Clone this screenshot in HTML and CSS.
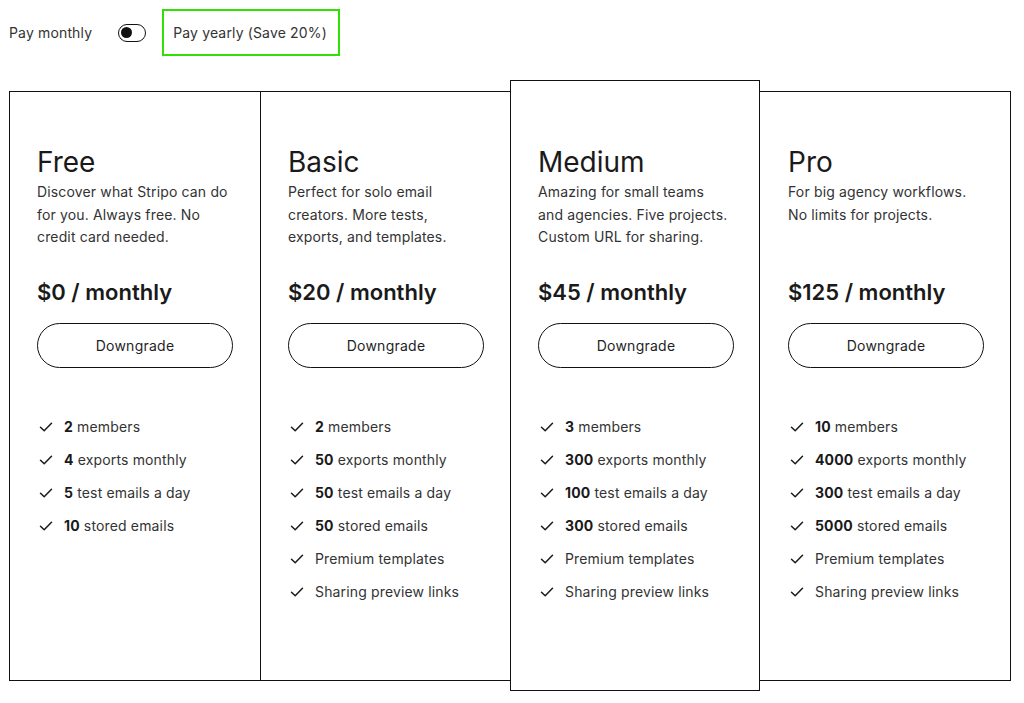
FILE: index.html
```html
<!DOCTYPE html>
<html lang="en">
<head>
<meta charset="utf-8">
<title>Pricing</title>
<link rel="stylesheet" href="styles.css">
</head>
<body>
<div class="page">
  <div class="billing">
    <span class="billing-label">Pay monthly</span>
    <span class="toggle"><span class="toggle-knob"></span></span>
    <span class="billing-yearly">Pay yearly (Save 20%)</span>
  </div>

  <div class="plans">
    <div class="plan plan-free">
      <h2 class="plan-title">Free</h2>
      <p class="plan-desc">Discover what Stripo can do for you. Always free. No credit card needed.</p>
      <div class="plan-price">$0 / monthly</div>
      <button class="plan-btn">Downgrade</button>
      <ul class="features">
        <li><svg class="check" viewBox="0 0 14 14"><path d="M1.5 7.2 L5.2 10.8 L12.5 3.2"/></svg><span><b>2</b> members</span></li>
        <li><svg class="check" viewBox="0 0 14 14"><path d="M1.5 7.2 L5.2 10.8 L12.5 3.2"/></svg><span><b>4</b> exports monthly</span></li>
        <li><svg class="check" viewBox="0 0 14 14"><path d="M1.5 7.2 L5.2 10.8 L12.5 3.2"/></svg><span><b>5</b> test emails a day</span></li>
        <li><svg class="check" viewBox="0 0 14 14"><path d="M1.5 7.2 L5.2 10.8 L12.5 3.2"/></svg><span><b>10</b> stored emails</span></li>
      </ul>
    </div>

    <div class="plan plan-basic">
      <h2 class="plan-title">Basic</h2>
      <p class="plan-desc">Perfect for solo email creators. More tests, exports, and templates.</p>
      <div class="plan-price">$20 / monthly</div>
      <button class="plan-btn">Downgrade</button>
      <ul class="features">
        <li><svg class="check" viewBox="0 0 14 14"><path d="M1.5 7.2 L5.2 10.8 L12.5 3.2"/></svg><span><b>2</b> members</span></li>
        <li><svg class="check" viewBox="0 0 14 14"><path d="M1.5 7.2 L5.2 10.8 L12.5 3.2"/></svg><span><b>50</b> exports monthly</span></li>
        <li><svg class="check" viewBox="0 0 14 14"><path d="M1.5 7.2 L5.2 10.8 L12.5 3.2"/></svg><span><b>50</b> test emails a day</span></li>
        <li><svg class="check" viewBox="0 0 14 14"><path d="M1.5 7.2 L5.2 10.8 L12.5 3.2"/></svg><span><b>50</b> stored emails</span></li>
        <li><svg class="check" viewBox="0 0 14 14"><path d="M1.5 7.2 L5.2 10.8 L12.5 3.2"/></svg><span>Premium templates</span></li>
        <li><svg class="check" viewBox="0 0 14 14"><path d="M1.5 7.2 L5.2 10.8 L12.5 3.2"/></svg><span>Sharing preview links</span></li>
      </ul>
    </div>

    <div class="plan plan-featured">
      <h2 class="plan-title">Medium</h2>
      <p class="plan-desc">Amazing for small teams and agencies. Five projects. Custom URL for sharing.</p>
      <div class="plan-price">$45 / monthly</div>
      <button class="plan-btn">Downgrade</button>
      <ul class="features">
        <li><svg class="check" viewBox="0 0 14 14"><path d="M1.5 7.2 L5.2 10.8 L12.5 3.2"/></svg><span><b>3</b> members</span></li>
        <li><svg class="check" viewBox="0 0 14 14"><path d="M1.5 7.2 L5.2 10.8 L12.5 3.2"/></svg><span><b>300</b> exports monthly</span></li>
        <li><svg class="check" viewBox="0 0 14 14"><path d="M1.5 7.2 L5.2 10.8 L12.5 3.2"/></svg><span><b>100</b> test emails a day</span></li>
        <li><svg class="check" viewBox="0 0 14 14"><path d="M1.5 7.2 L5.2 10.8 L12.5 3.2"/></svg><span><b>300</b> stored emails</span></li>
        <li><svg class="check" viewBox="0 0 14 14"><path d="M1.5 7.2 L5.2 10.8 L12.5 3.2"/></svg><span>Premium templates</span></li>
        <li><svg class="check" viewBox="0 0 14 14"><path d="M1.5 7.2 L5.2 10.8 L12.5 3.2"/></svg><span>Sharing preview links</span></li>
      </ul>
    </div>

    <div class="plan plan-pro">
      <h2 class="plan-title">Pro</h2>
      <p class="plan-desc">For big agency workflows. No limits for projects.</p>
      <div class="plan-price">$125 / monthly</div>
      <button class="plan-btn">Downgrade</button>
      <ul class="features">
        <li><svg class="check" viewBox="0 0 14 14"><path d="M1.5 7.2 L5.2 10.8 L12.5 3.2"/></svg><span><b>10</b> members</span></li>
        <li><svg class="check" viewBox="0 0 14 14"><path d="M1.5 7.2 L5.2 10.8 L12.5 3.2"/></svg><span><b>4000</b> exports monthly</span></li>
        <li><svg class="check" viewBox="0 0 14 14"><path d="M1.5 7.2 L5.2 10.8 L12.5 3.2"/></svg><span><b>300</b> test emails a day</span></li>
        <li><svg class="check" viewBox="0 0 14 14"><path d="M1.5 7.2 L5.2 10.8 L12.5 3.2"/></svg><span><b>5000</b> stored emails</span></li>
        <li><svg class="check" viewBox="0 0 14 14"><path d="M1.5 7.2 L5.2 10.8 L12.5 3.2"/></svg><span>Premium templates</span></li>
        <li><svg class="check" viewBox="0 0 14 14"><path d="M1.5 7.2 L5.2 10.8 L12.5 3.2"/></svg><span>Sharing preview links</span></li>
      </ul>
    </div>
  </div>
</div>
</body>
</html>
```

FILE: styles.css
```css
* { box-sizing: border-box; }

html, body {
  margin: 0;
  padding: 0;
  background: #fff;
}

body {
  font-family: Inter, "Noto Sans", "Liberation Sans", sans-serif;
  color: #1f1f1f;
  font-size: 14px;
  letter-spacing: 0.15px;
}

.page {
  padding: 9px 0 0 9px;
}

.billing {
  display: flex;
  align-items: center;
  height: 47px;
}

.billing-label {
  color: #333;
  font-size: 14px;
}

.toggle {
  display: inline-flex;
  align-items: center;
  width: 28px;
  height: 18px;
  margin-left: 26px;
  border: 1.5px solid #111;
  border-radius: 9px;
  padding-left: 2px;
}

.toggle-knob {
  width: 11px;
  height: 11px;
  border-radius: 50%;
  background: #111;
}

.billing-yearly {
  display: flex;
  align-items: center;
  height: 47px;
  margin-left: 16px;
  padding: 0 11px 0 9px;
  border: 2px solid #2fe000;
  color: #333;
  font-size: 14px;
}

.plans {
  display: flex;
  align-items: flex-start;
  margin-top: 24px;
}

.plan {
  flex: 0 0 auto;
  height: 590px;
  margin-top: 11px;
  margin-right: -1px;
  border: 1px solid #111;
  background: #fff;
  padding: 52px 20px 0 27px;
}

.plan-free { width: 252px; }
.plan-basic { width: 251px; }
.plan-pro { width: 252px; padding-left: 28px; }

.plan-featured {
  position: relative;
  z-index: 1;
  width: 250px;
  height: 611px;
  margin-top: 0;
  padding-top: 63px;
}

.plan-title {
  margin: 0;
  font-size: 28px;
  font-weight: 400;
  line-height: 36px;
  letter-spacing: 0;
  color: #1a1a1a;
}

.plan-desc {
  margin: 1px 0 0;
  max-width: 191px;
  min-height: 68px;
  font-size: 14px;
  line-height: 22.5px;
  color: #333;
}

.plan-price {
  margin-top: 28px;
  font-size: 22px;
  font-weight: 600;
  line-height: 30px;
  letter-spacing: 0;
  color: #1a1a1a;
}

.plan-btn {
  display: block;
  width: 196px;
  height: 45px;
  margin-top: 16px;
  border: 1px solid #111;
  border-radius: 23px;
  background: #fff;
  font-family: inherit;
  font-size: 14px;
  font-weight: 400;
  letter-spacing: 0.25px;
  color: #1f1f1f;
  cursor: pointer;
}

.features {
  list-style: none;
  margin: 42px 0 0;
  padding: 0 0 0 2px;
}

.features li {
  display: flex;
  align-items: center;
  height: 33px;
  color: #333;
  font-size: 14px;
}

.features b {
  font-weight: 700;
  color: #1a1a1a;
}

.check {
  width: 14px;
  height: 14px;
  margin-right: 11px;
  flex: none;
}

.check path {
  fill: none;
  stroke: #1a1a1a;
  stroke-width: 1.5;
  stroke-linecap: round;
  stroke-linejoin: round;
}
```
